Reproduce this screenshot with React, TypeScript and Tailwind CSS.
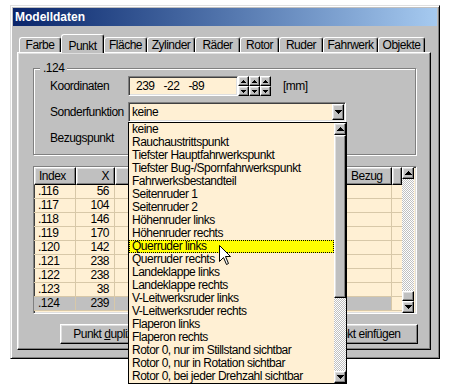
import React from "react";

const raised =
  "border border-t-white border-l-white border-r-black border-b-black shadow-[inset_-1px_-1px_0_#808080,inset_1px_1px_0_#dfdfdf]";
const sunken =
  "border border-t-[#808080] border-l-[#808080] border-r-white border-b-white shadow-[inset_1px_1px_0_#404040,inset_-1px_-1px_0_#dfdfdf]";
const checker =
  "bg-[repeating-conic-gradient(#c0c0c0_0%_25%,#ffffff_0%_50%)] bg-[length:2px_2px]";

const Arrow = ({ up, w = 7 }: { up?: boolean; w?: number }) => {
  const h = Math.ceil(w / 2);
  return (
    <svg width={w} height={h} viewBox={`0 0 ${w} ${h}`} className="block" shapeRendering="crispEdges">
      <polygon
        points={up ? `0,${h} ${w},${h} ${w / 2},0` : `0,0 ${w},0 ${w / 2},${h}`}
        fill="black"
      />
    </svg>
  );
};

const tabs = [
  { label: "Farbe", w: "w-[42px]" },
  { label: "Punkt", w: "w-[43px]", active: true },
  { label: "Fläche", w: "w-[43px]" },
  { label: "Zylinder", w: "w-[48px]" },
  { label: "Räder", w: "w-[45px]" },
  { label: "Rotor", w: "w-[39px]" },
  { label: "Ruder", w: "w-[44px]" },
  { label: "Fahrwerk", w: "w-[55px]" },
  { label: "Objekte", w: "w-[47px]" },
];

const options = [
  "keine",
  "Rauchaustrittspunkt",
  "Tiefster Hauptfahrwerkspunkt",
  "Tiefster Bug-/Spornfahrwerkspunkt",
  "Fahrwerksbestandteil",
  "Seitenruder 1",
  "Seitenruder 2",
  "Höhenruder links",
  "Höhenruder rechts",
  "Querruder links",
  "Querruder rechts",
  "Landeklappe links",
  "Landeklappe rechts",
  "V-Leitwerksruder links",
  "V-Leitwerksruder rechts",
  "Flaperon links",
  "Flaperon rechts",
  "Rotor 0, nur im Stillstand sichtbar",
  "Rotor 0, nur in Rotation sichtbar",
  "Rotor 0, bei jeder Drehzahl sichtbar",
];

const rows = [
  [".116", "56"],
  [".117", "104"],
  [".118", "146"],
  [".119", "170"],
  [".120", "142"],
  [".121", "238"],
  [".122", "238"],
  [".123", "38"],
  [".124", "239"],
];

// hidden columns sit under the open list
const hiddenCols = ["w-[44px]", "w-[44px]", "w-[70px]", "w-[71px]"];

const Spinner = () => (
  <div className="flex flex-col">
    <div className={`${raised} w-[11px] h-[10px] flex items-center justify-center bg-[#c0c0c0]`}>
      <Arrow up w={5} />
    </div>
    <div className={`${raised} w-[11px] h-[10px] flex items-center justify-center bg-[#c0c0c0]`}>
      <Arrow w={5} />
    </div>
  </div>
);

const Cursor = () => (
  <svg width="13" height="21" viewBox="0 0 13 21" className="absolute left-[219px] top-[245px] z-30">
    <path
      d="M0.5 0.5 L0.5 16.5 L4.5 12.5 L7.5 19.5 L9.5 18.5 L6.5 11.5 L11.5 11.5 Z"
      fill="white"
      stroke="black"
      strokeWidth="1"
      strokeLinejoin="miter"
    />
  </svg>
);

export default function App() {
  return (
    <div className="relative w-[452px] h-[390px] bg-white overflow-hidden pt-[5px] pl-[10px] font-['Liberation_Sans',Arial,sans-serif] text-[12px] tracking-[-0.5px] text-black">
      <div className="w-[430px] h-[354px] bg-[#c0c0c0] border border-t-[#dfdfdf] border-l-[#dfdfdf] border-r-black border-b-black shadow-[inset_1px_1px_0_#fff,inset_-1px_-1px_0_#808080] p-[2px] flex flex-col">
        {/* title bar */}
        <div className="h-[18px] shrink-0 bg-linear-to-r from-[#0a246a] to-[#a6caf0] flex items-center pl-[2px] text-white font-bold tracking-normal">
          Modelldaten
        </div>

        <div className="pl-[4px] pr-[6px] pt-[8px]">
          {/* tabs */}
          <div className="flex items-end h-[18px] pl-[2px]">
            {tabs.map((t) =>
              t.active ? (
                <div
                  key={t.label}
                  className={`${t.w} h-[19px] -mb-px relative z-10 bg-[#c0c0c0] rounded-t-[3px] border-t border-l border-r border-t-white border-l-white border-r-black shadow-[inset_-1px_0_0_#808080] flex justify-center pt-[2px]`}
                >
                  {t.label}
                </div>
              ) : (
                <div
                  key={t.label}
                  className={`${t.w} h-[15px] bg-[#c0c0c0] rounded-t-[3px] border-t border-l border-r border-t-white border-l-white border-r-black shadow-[inset_-1px_0_0_#808080] flex items-center justify-center`}
                >
                  {t.label}
                </div>
              )
            )}
          </div>

          {/* tab panel */}
          <div className="w-[414px] h-[298px] border border-t-white border-l-white border-r-black border-b-black shadow-[inset_-1px_-1px_0_#808080,inset_1px_1px_0_#dfdfdf] pl-[15px] pt-[15px]">
            {/* group box */}
            <div className="w-[383px] h-[87px] border border-[#808080] shadow-[inset_1px_1px_0_#fff,1px_1px_0_#fff]">
              <div className="-mt-[8px] ml-[6px] px-[3px] w-fit leading-[14px] bg-[#c0c0c0]">.124</div>
              <div className="mt-[1px] pl-[16px] flex flex-col gap-[6px]">
                <div className="flex items-center h-[20px]">
                  <div className="w-[78px]">Koordinaten</div>
                  <div className={`${sunken} w-[110px] h-[20px] bg-[#fff0d4] flex items-center pl-[7px] gap-[9px]`}>
                    <span>239</span>
                    <span>-22</span>
                    <span>-89</span>
                  </div>
                  <div className="flex">
                    <Spinner />
                    <Spinner />
                    <Spinner />
                  </div>
                  <div className="ml-[12px]">[mm]</div>
                </div>

                <div className="flex items-center h-[20px]">
                  <div className="w-[78px]">Sonderfunktion</div>
                  <div className={`${sunken} relative w-[218px] h-[20px] bg-[#fff0d4] flex items-center justify-between pl-[3px] pr-[1px]`}>
                    <span>keine</span>
                    <div className={`${raised} w-[12px] h-[16px] bg-[#c0c0c0] flex items-center justify-center`}>
                      <Arrow />
                    </div>

                    {/* open list */}
                    <div className="absolute top-full -left-px mt-px w-[219px] h-[262px] border border-black bg-[#fff0d4] z-20 flex">
                      <div className="flex-1 flex flex-col">
                        {options.map((o) =>
                          o === "Querruder links" ? (
                            <div
                              key={o}
                              className="h-[13px] leading-[11px] pl-[2px] bg-[#ffff00] border border-dotted border-black whitespace-nowrap"
                            >
                              {o}
                            </div>
                          ) : (
                            <div key={o} className="h-[13px] leading-[13px] pl-[3px] whitespace-nowrap overflow-hidden">
                              {o}
                            </div>
                          )
                        )}
                      </div>
                      <div className="w-[12px] flex flex-col">
                        <div className={`${raised} h-[12px] bg-[#c0c0c0] flex items-center justify-center`}>
                          <Arrow up />
                        </div>
                        <div className={`${raised} h-[163px] bg-[#c0c0c0]`} />
                        <div className={`flex-1 ${checker}`} />
                        <div className={`${raised} h-[12px] bg-[#c0c0c0] flex items-center justify-center`}>
                          <Arrow />
                        </div>
                      </div>
                    </div>
                  </div>
                </div>

                <div className="flex items-center h-[20px]">
                  <div className="w-[78px]">Bezugspunkt</div>
                </div>
              </div>
            </div>

            {/* point table */}
            <div className={`${sunken} mt-[11px] w-[384px] h-[148px] flex bg-[#fff0d4]`}>
              <div className="w-[368px] flex flex-col">
                <div className="flex h-[18px] bg-[#c0c0c0]">
                  <div className={`${raised} w-[42px] flex items-center pl-[4px]`}>Index</div>
                  <div className={`${raised} w-[39px] flex items-center justify-end pr-[5px]`}>X</div>
                  {hiddenCols.map((w, i) => (
                    <div key={i} className={`${raised} ${w}`} />
                  ))}
                  <div className={`${raised} w-[48px] flex items-center pl-[6px]`}>Bezug</div>
                  <div className={`${raised} w-[10px]`} />
                </div>
                {rows.map(([idx, x], r) => {
                  const sel = r === rows.length - 1;
                  const cell = `h-[14px] leading-[13px] border-r border-b border-[#d8c8a8] ${sel ? "bg-[#c0c0c0]" : ""}`;
                  return (
                    <div key={idx} className="flex">
                      <div className={`${cell} w-[42px] pl-[4px]`}>{idx}</div>
                      <div className={`${cell} w-[39px] text-right pr-[5px]`}>{x}</div>
                      {hiddenCols.map((w, i) => (
                        <div key={i} className={`${cell} ${w}`} />
                      ))}
                      <div className={`${cell} w-[48px]`} />
                      <div className="h-[14px] w-[10px] border-b border-[#d8c8a8]" />
                    </div>
                  );
                })}
              </div>
              <div className="w-[12px] flex flex-col">
                <div className={`${raised} h-[12px] bg-[#c0c0c0] flex items-center justify-center`}>
                  <Arrow up />
                </div>
                <div className={`flex-1 ${checker}`} />
                <div className={`${raised} h-[10px] bg-[#c0c0c0]`} />
                <div className={`${raised} h-[12px] bg-[#c0c0c0] flex items-center justify-center`}>
                  <Arrow />
                </div>
              </div>
            </div>

            {/* buttons */}
            <div className="mt-[10px] ml-[27px] w-[358px] flex justify-between">
              <div className={`${raised} w-[110px] h-[20px] bg-[#c0c0c0] flex items-center justify-center`}>
                Punkt&nbsp;<span className="underline">d</span>uplizieren
              </div>
              <div className={`${raised} w-[108px] h-[20px] bg-[#c0c0c0] flex items-center justify-center`}>
                Punkt einfügen
              </div>
            </div>
          </div>
        </div>
      </div>
      <Cursor />
    </div>
  );
}
